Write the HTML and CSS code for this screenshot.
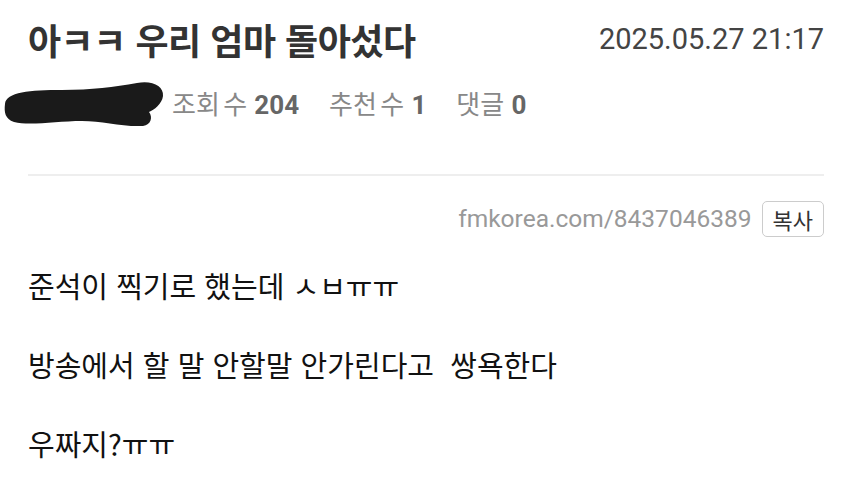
FILE: index.html
```html
<!DOCTYPE html>
<html lang="ko">
<head>
<meta charset="utf-8">
<link rel="stylesheet" href="styles.css">
</head>
<body>
<div class="page">
  <div class="head">
    <h1 class="title">아ㅋㅋ 우리 엄마 돌아섰다</h1>
    <span class="date">2025.05.27 21:17</span>
  </div>
  <div class="meta">
    <svg class="blot" width="162" height="48" viewBox="0 0 162 48">
      <path d="M3 24 C4 12 28 10 60 10 C90 10 112 7 135 3 C150 0 162 6 161 16 C160 24 152 30 147 32 C151 37 149 45 141 46 C120 47 100 41 80 41 C55 41 28 46 12 42 C3 39 2 32 3 24 Z" fill="#1a1a1a"/>
    </svg>
    <span class="stat">조회<span class="sp"> </span>수 <b>204</b></span>
    <span class="stat">추천<span class="sp"> </span>수 <b>1</b></span>
    <span class="stat">댓글 <b>0</b></span>
  </div>
  <hr class="divider">
  <div class="link-row">
    <span class="url">fmkorea.com/8437046389</span>
    <button class="copy">복사</button>
  </div>
  <div class="body">
    <p>준석이 찍기로 했는데 ㅅㅂㅠㅠ</p>
    <p>방송에서 할 말 안할말 안가린다고&nbsp; 쌍욕한다</p>
    <p>우짜지?ㅠㅠ</p>
  </div>
</div>
</body>
</html>
```

FILE: styles.css
```css
* { box-sizing: border-box; }
html, body { margin: 0; padding: 0; background: #fff; }
body {
  font-family: Roboto, "Noto Sans CJK KR", sans-serif;
  width: 850px;
  height: 500px;
  overflow: hidden;
}
.page { padding: 0 26px 0 28px; }
.head {
  display: flex;
  justify-content: space-between;
  align-items: center;
  height: 78px;
}
.title {
  margin: 0;
  font-size: 36px;
  line-height: 44px;
  font-weight: 700;
  color: #333;
  font-family: "Noto Sans CJK KR", sans-serif;
  letter-spacing: -0.5px;
}
.date {
  font-size: 29px;
  line-height: 36px;
  color: #444;
}
.meta {
  display: flex;
  align-items: center;
  height: 52px;
  margin-left: -26px;
  margin-top: 0;
}
.blot { display: block; margin-right: 8px; }
.stat {
  font-size: 26px;
  line-height: 34px;
  color: #888;
  margin-right: 30px;
  font-family: "Noto Sans CJK KR", sans-serif;
}
.stat .sp { letter-spacing: -4px; }
.stat b { color: #666; font-family: Roboto, sans-serif; font-weight: 700; }
.divider {
  border: 0;
  border-top: 2px solid #eee;
  margin: 44px 0 0 0;
}
.link-row {
  display: flex;
  justify-content: flex-end;
  align-items: center;
  gap: 10px;
  margin-top: 25px;
}
.url { font-size: 24.5px; line-height: 30px; color: #999; }
.copy {
  font-family: "Noto Sans CJK KR", sans-serif;
  font-size: 22px;
  color: #333;
  background: #fff;
  border: 1px solid #ccc;
  border-radius: 5px;
  padding: 0 10px;
  height: 36px;
  line-height: 1;
}
.body { margin-top: 29px; }
.body p {
  margin: 0 0 40px 0;
  font-size: 29px;
  color: #111;
  line-height: 39px;
  font-family: "Noto Sans CJK KR", sans-serif;
}
```
